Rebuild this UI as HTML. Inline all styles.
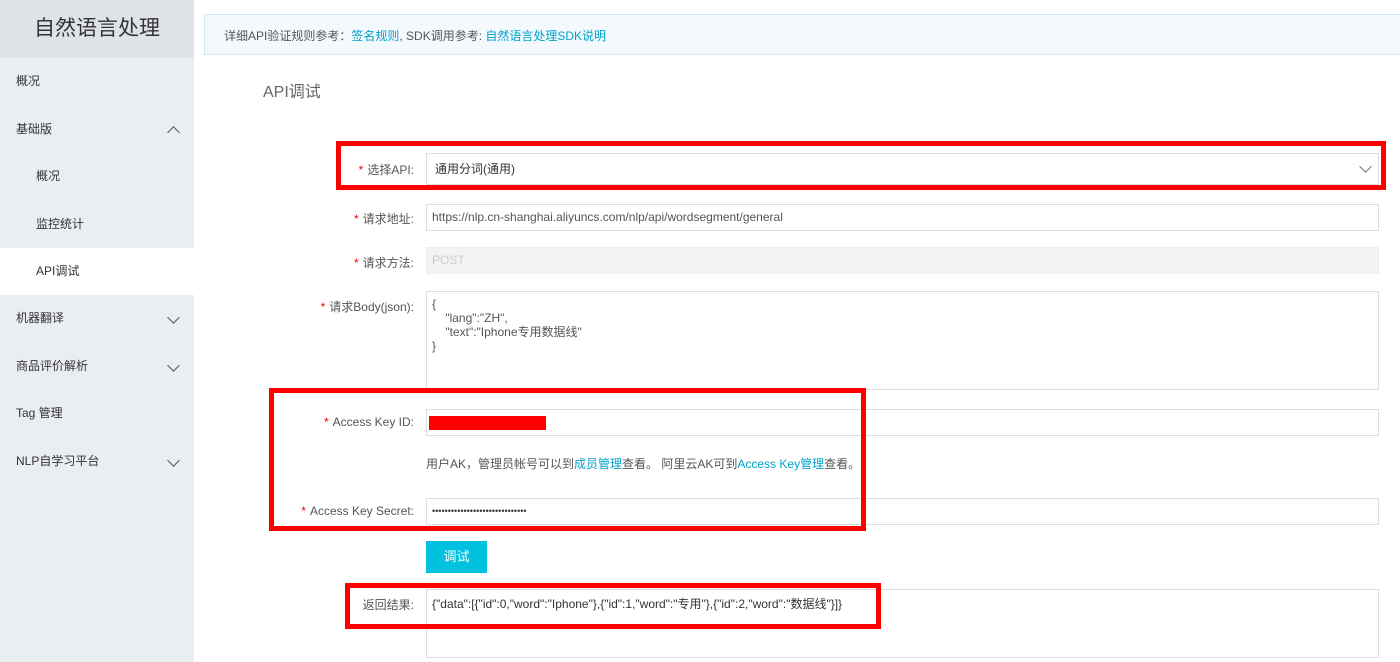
<!DOCTYPE html>
<html><head><meta charset="utf-8"><style>
*{box-sizing:border-box;margin:0;padding:0}
body{width:1400px;height:662px;overflow:hidden;background:#fff;font-family:"Liberation Sans","Noto Sans CJK SC",sans-serif;font-size:12px;color:#333;position:relative}
.a{position:absolute}
.side{left:0;top:0;width:194px;height:662px;background:#eaedf1}
.hd{left:0;top:0;width:194px;height:58px;background:#dfe2e6;font-size:21px;color:#333;text-align:center;line-height:58px}
.it{left:0;width:194px;height:47px;line-height:47px;font-size:12px;color:#333}
.chev{position:absolute;right:16px;top:18px;width:9px;height:9px;border-right:1.3px solid #555;border-bottom:1.3px solid #555;transform:rotate(45deg)}
.up{transform:rotate(-135deg);top:22px}
.lbl{width:200px;text-align:right;left:214px;color:#555}
.lbl b{color:#e00;font-weight:normal;margin-right:4px}
.in{left:426px;width:953px;border:1px solid #ddd;padding-left:5px;color:#555}
.red{border:5px solid #f00}
</style></head><body>
<div class="a side"></div>
<div class="a hd">自然语言处理</div>
<div class="a it" style="top:58px;padding-left:16px">概况</div>
<div class="a it" style="top:106px;padding-left:16px">基础版<span class="chev up"></span></div>
<div class="a it" style="top:153px;padding-left:36px">概况</div>
<div class="a it" style="top:201px;padding-left:36px">监控统计</div>
<div class="a it" style="top:248px;padding-left:36px;background:#fff">API调试</div>
<div class="a it" style="top:295px;padding-left:16px">机器翻译<span class="chev"></span></div>
<div class="a it" style="top:343px;padding-left:16px">商品评价解析<span class="chev"></span></div>
<div class="a it" style="top:390px;padding-left:16px">Tag 管理</div>
<div class="a it" style="top:438px;padding-left:16px">NLP自学习平台<span class="chev"></span></div>

<div class="a" style="left:204px;top:14px;width:1200px;height:41px;background:#f4f9fd;border:1px solid #d7e8f5;line-height:39px;padding-left:485px;padding-left:184px;color:#666"></div>
<div class="a" style="left:224px;top:27px;color:#555">详细API验证规则参考：<span style="color:#00a2ca">签名规则</span>, SDK调用参考: <span style="color:#00a2ca">自然语言处理SDK说明</span></div>
<div class="a" style="left:263px;top:78px;font-size:16px;color:#666">API调试</div>

<div class="a lbl" style="top:161px"><b>*</b>选择API:</div>
<div class="a in" style="top:153px;height:32px;line-height:30px;padding-left:8px;color:#333">通用分词(通用)<span style="position:absolute;right:8px;top:8px;width:9px;height:9px;border-right:1.3px solid #777;border-bottom:1.3px solid #777;transform:rotate(45deg)"></span></div>
<div class="a red" style="left:336px;top:141px;width:1050px;height:49px"></div>

<div class="a lbl" style="top:210px"><b>*</b>请求地址:</div>
<div class="a in" style="top:204px;height:27px;line-height:25px">https://nlp.cn-shanghai.aliyuncs.com/nlp/api/wordsegment/general</div>
<div class="a lbl" style="top:254px"><b>*</b>请求方法:</div>
<div class="a in" style="top:247px;height:27px;line-height:25px;background:#f3f3f3;border-color:#eee;color:#ccc">POST</div>
<div class="a lbl" style="top:298px"><b>*</b>请求Body(json):</div>
<div class="a in" style="top:291px;height:99px;padding-top:5px;line-height:14px">{<br>&nbsp;&nbsp;&nbsp;&nbsp;"lang":"ZH",<br>&nbsp;&nbsp;&nbsp;&nbsp;"text":"Iphone专用数据线"<br>}</div>

<div class="a lbl" style="top:415px"><b>*</b>Access Key ID:</div>
<div class="a in" style="top:409px;height:27px"></div>
<div class="a" style="left:429px;top:416px;width:117px;height:14px;background:#f00"></div>
<div class="a" style="left:426px;top:455px;color:#555">用户AK，管理员帐号可以到<span style="color:#00a2ca">成员管理</span>查看。 阿里云AK可到<span style="color:#00a2ca">Access Key管理</span>查看。</div>
<div class="a lbl" style="top:504px"><b>*</b>Access Key Secret:</div>
<div class="a in" style="top:498px;height:27px;line-height:25px;font-size:9px;color:#333">••••••••••••••••••••••••••••••</div>
<div class="a red" style="left:269px;top:388px;width:597px;height:143px"></div>

<div class="a" style="left:426px;top:541px;width:61px;height:32px;background:#00c1de;color:#fff;text-align:center;line-height:32px;font-size:13px">调试</div>

<div class="a" style="left:352px;top:596px;width:62px;text-align:right;color:#555">返回结果:</div>
<div class="a in" style="top:589px;height:69px;padding-top:5px;color:#333">{"data":[{"id":0,"word":"Iphone"},{"id":1,"word":"专用"},{"id":2,"word":"数据线"}]}</div>
<div class="a red" style="left:345px;top:583px;width:536px;height:46px"></div>
</body></html>
